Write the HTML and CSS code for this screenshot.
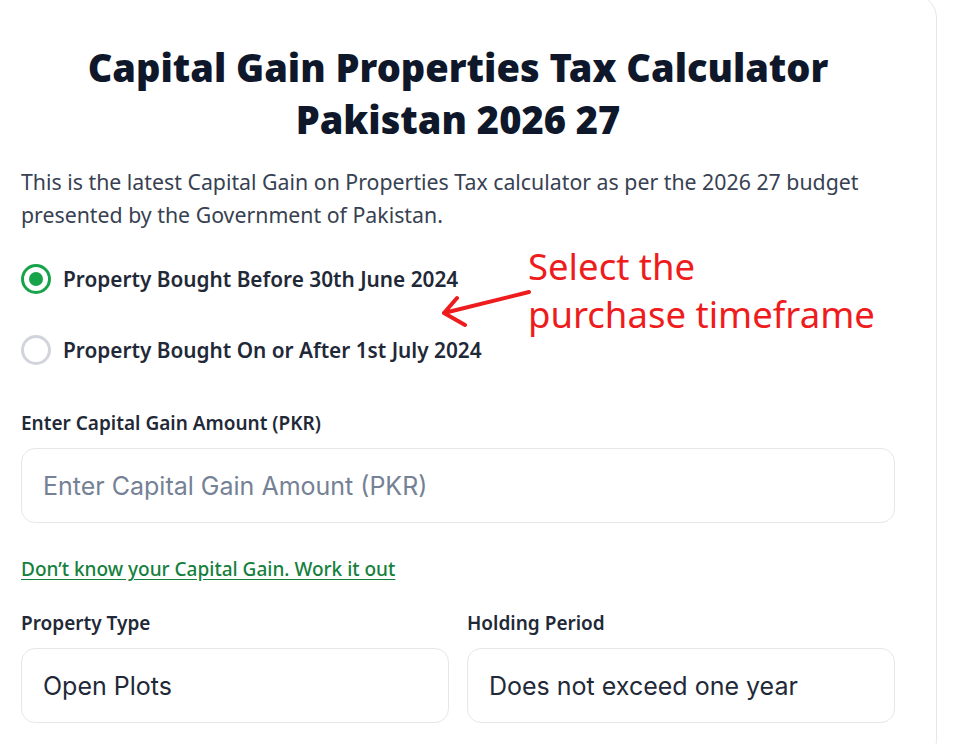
FILE: index.html
```html
<!DOCTYPE html>
<html lang="en">
<head>
<meta charset="utf-8">
<title>Capital Gain Properties Tax Calculator Pakistan 2026 27</title>
<link rel="stylesheet" href="styles.css">
</head>
<body>
<main class="card">
  <h1 class="title">Capital Gain Properties Tax Calculator Pakistan 2026 27</h1>
  <p class="intro">This is the latest Capital Gain on Properties Tax calculator as per the 2026 27 budget presented by the Government of Pakistan.</p>

  <div class="radios">
    <label class="radio-row">
      <span class="radio checked"></span>
      <span class="radio-text">Property Bought Before 30th June 2024</span>
    </label>
    <label class="radio-row">
      <span class="radio"></span>
      <span class="radio-text">Property Bought On or After 1st July 2024</span>
    </label>
    <svg class="note-arrow" width="95" height="45" viewBox="0 0 95 45">
      <path d="M89 7 L4 28 M4 28 L17 13 M4 28 L25 40" fill="none" stroke="#ee1c1c" stroke-width="4" stroke-linecap="round" stroke-linejoin="round"/>
    </svg>
    <div class="note-text">Select the<br>purchase timeframe</div>
  </div>

  <div class="field">
    <div class="field-label">Enter Capital Gain Amount (PKR)</div>
    <div class="box placeholder">Enter Capital Gain Amount (PKR)</div>
  </div>

  <a class="work-link" href="#">Don’t know your Capital Gain. Work it out</a>

  <div class="pair">
    <div class="field">
      <div class="field-label">Property Type</div>
      <div class="box value">Open Plots</div>
    </div>
    <div class="field">
      <div class="field-label">Holding Period</div>
      <div class="box value">Does not exceed one year</div>
    </div>
  </div>
</main>
</body>
</html>
```

FILE: styles.css
```css
html, body {
  margin: 0;
  padding: 0;
  background: #ffffff;
  height: 744px;
  overflow: hidden;
}

body {
  font-family: "Noto Sans", "Open Sans", sans-serif;
  color: #1f2937;
}

.card {
  margin-top: -6px;
  margin-left: -20px;
  width: 874px;
  padding: 46px 41px 40px 40px;
  border: 1px solid #e5e7eb;
  border-radius: 24px;
  background: #ffffff;
}

.title {
  margin: 0;
  text-align: center;
  font-size: 38px;
  line-height: 52px;
  font-weight: 900;
  color: #0f172a;
  padding: 0 40px;
}

.intro {
  margin: 20px 0 0;
  font-size: 21.3px;
  line-height: 33px;
  color: #374151;
}

.radios {
  position: relative;
  margin-top: 33px;
  display: flex;
  flex-direction: column;
  gap: 41px;
}

.radio-row {
  display: flex;
  align-items: center;
  gap: 12px;
  height: 30px;
}

.radio {
  box-sizing: border-box;
  width: 30px;
  height: 30px;
  border-radius: 50%;
  border: 3px solid #d1d5db;
  background: #fff;
  display: flex;
  align-items: center;
  justify-content: center;
}

.radio.checked {
  border-color: #16a34a;
}

.radio.checked::after {
  content: "";
  width: 14px;
  height: 14px;
  border-radius: 50%;
  background: #16a34a;
}

.radio-text {
  font-size: 20.8px;
  font-weight: 600;
  color: #1f2937;
}

.note-arrow {
  position: absolute;
  left: 419px;
  top: 21px;
}

.note-text {
  position: absolute;
  left: 507px;
  top: -22px;
  font-family: "Noto Sans", sans-serif;
  font-size: 36.5px;
  line-height: 48px;
  color: #ee1c1c;
}

.field {
  display: flex;
  flex-direction: column;
  gap: 13px;
}

.radios + .field {
  margin-top: 46px;
}

.field-label {
  font-size: 19px;
  line-height: 24px;
  font-weight: 600;
  color: #1f2937;
}

.box {
  box-sizing: border-box;
  height: 75px;
  border: 1px solid #e5e7eb;
  border-radius: 14px;
  padding: 0 21px;
  display: flex;
  align-items: center;
  font-family: "Inter", "Open Sans", sans-serif;
  font-size: 25px;
}

.placeholder {
  color: #758195;
}

.value {
  color: #1f2937;
}

.work-link {
  display: inline-block;
  margin-top: 34px;
  font-size: 19px;
  line-height: 24px;
  font-weight: 500;
  color: #15803d;
  text-decoration: underline;
  text-underline-offset: 3px;
}

.pair {
  margin-top: 30px;
  display: grid;
  grid-template-columns: 1fr 1fr;
  gap: 18px;
}
```
